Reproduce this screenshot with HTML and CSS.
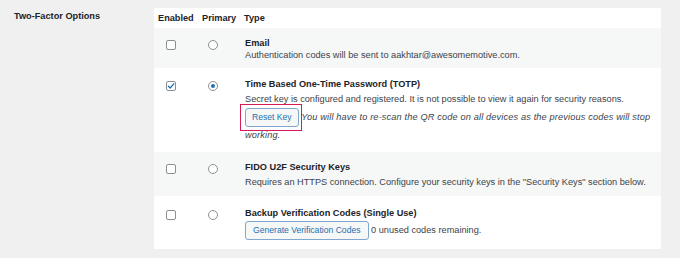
FILE: index.html
```html
<!DOCTYPE html>
<html>
<head>
<meta charset="utf-8">
<link rel="stylesheet" href="styles.css">
</head>
<body>
<div class="page">
  <div class="label">Two-Factor Options</div>
  <table class="providers">
    <colgroup>
      <col class="c-enabled"><col class="c-primary"><col class="c-type">
    </colgroup>
    <thead>
      <tr><th>Enabled</th><th>Primary</th><th>Type</th></tr>
    </thead>
    <tbody>
      <tr class="alt r-email">
        <td class="cb"><span class="check"></span></td>
        <td class="rb"><span class="radio"></span></td>
        <td class="type">
          <div class="title">Email</div>
          <div class="desc">Authentication codes will be sent to aakhtar@awesomemotive.com.</div>
        </td>
      </tr>
      <tr class="r-totp">
        <td class="cb"><span class="check on"><svg viewBox="0 0 10 10" width="10" height="10"><path d="M2.4 5.2 L4.2 7 L7.8 2.8" fill="none" stroke="#2271b1" stroke-width="1.3" stroke-linecap="round" stroke-linejoin="round"/></svg></span></td>
        <td class="rb"><span class="radio on"></span></td>
        <td class="type">
          <div class="title">Time Based One-Time Password (TOTP)</div>
          <div class="desc">Secret key is configured and registered. It is not possible to view it again for security reasons.</div>
          <div class="actions"><span class="highlight"><button class="btn">Reset Key</button></span> <em>You will have to re-scan the QR code on all devices as the previous codes will stop working.</em></div>
        </td>
      </tr>
      <tr class="alt r-fido">
        <td class="cb"><span class="check"></span></td>
        <td class="rb"><span class="radio"></span></td>
        <td class="type">
          <div class="title">FIDO U2F Security Keys</div>
          <div class="desc">Requires an HTTPS connection. Configure your security keys in the "Security Keys" section below.</div>
        </td>
      </tr>
      <tr class="r-backup">
        <td class="cb"><span class="check"></span></td>
        <td class="rb"><span class="radio"></span></td>
        <td class="type">
          <div class="title">Backup Verification Codes (Single Use)</div>
          <div class="actions"><button class="btn">Generate Verification Codes</button> 0 unused codes remaining.</div>
        </td>
      </tr>
    </tbody>
  </table>
</div>
</body>
</html>
```
FILE: styles.css
```css
html, body {
  margin: 0;
  padding: 0;
  background: #f0f0f1;
}
body {
  font-family: "Liberation Sans", Arial, sans-serif;
  font-size: 9.2px;
  color: #3c434a;
  width: 680px;
  height: 258px;
  overflow: hidden;
}
.page {
  display: flex;
  align-items: flex-start;
  padding-top: 8px;
}
.label {
  width: 140px;
  padding-left: 14px;
  padding-top: 2px;
  font-weight: 700;
  color: #1d2327;
  line-height: 12px;
}
.providers {
  width: 507px;
  background: #fff;
  border-collapse: collapse;
  table-layout: fixed;
}
.c-enabled { width: 44px; }
.c-primary { width: 42px; }
.providers th {
  text-align: left;
  font-weight: 700;
  color: #1d2327;
  padding: 4px 4px 4px;
  line-height: 12px;
  height: 12px;
}
.providers td {
  vertical-align: top;
  line-height: 12px;
  padding: 9px 4px 7px;
}
.providers tr.alt td { background: #f6f7f7; }
.providers td.type { padding-left: 5px; padding-right: 3px; }
.providers td.cb { padding-left: 12px; }
.providers td.rb { padding-left: 10px; }

.r-totp td { padding-top: 10px; padding-bottom: 8px; }
.r-totp .desc { margin-top: 3px; }
.r-fido td { padding-bottom: 8px; }
.r-fido .desc { margin-top: 3px; }
.r-backup td { padding-top: 11px; padding-bottom: 9px; }

.check {
  display: block;
  box-sizing: border-box;
  width: 10px;
  height: 10px;
  margin-top: 3px;
  border: 1px solid #8c8f94;
  border-radius: 2px;
  background: #fff;
  position: relative;
}
.check svg {
  position: absolute;
  left: -1px;
  top: -1px;
}
.radio {
  display: block;
  box-sizing: border-box;
  width: 10px;
  height: 10px;
  margin-top: 3px;
  border: 1px solid #8c8f94;
  border-radius: 50%;
  background: #fff;
  position: relative;
}
.radio.on::after {
  content: "";
  position: absolute;
  left: 1.75px;
  top: 1.75px;
  width: 4.5px;
  height: 4.5px;
  border-radius: 50%;
  background: #2271b1;
}
.title {
  font-weight: 700;
  color: #1d2327;
}
.actions {
  margin-top: 3px;
  line-height: 17px;
}
.r-backup .actions { margin-top: 2px; line-height: 15px; }
.btn {
  font-family: inherit;
  font-size: 8.6px;
  color: #2271b1;
  background: #f6f7f7;
  border: 1px solid #7fa7d0;
  border-radius: 3px;
  height: 19px;
  padding: 0 6px;
  line-height: 17px;
  vertical-align: middle;
  margin: 0;
}
.r-backup .btn { padding: 0 7px; }
.highlight {
  position: relative;
  display: inline-block;
  vertical-align: middle;
}
.highlight .btn { display: block; }
.highlight::after {
  content: "";
  position: absolute;
  left: -5px;
  right: -3px;
  top: -4px;
  bottom: -4px;
  border: 1.5px solid #d81b55;
  pointer-events: none;
}
em {
  font-style: italic;
  letter-spacing: 0.15px;
}
```
